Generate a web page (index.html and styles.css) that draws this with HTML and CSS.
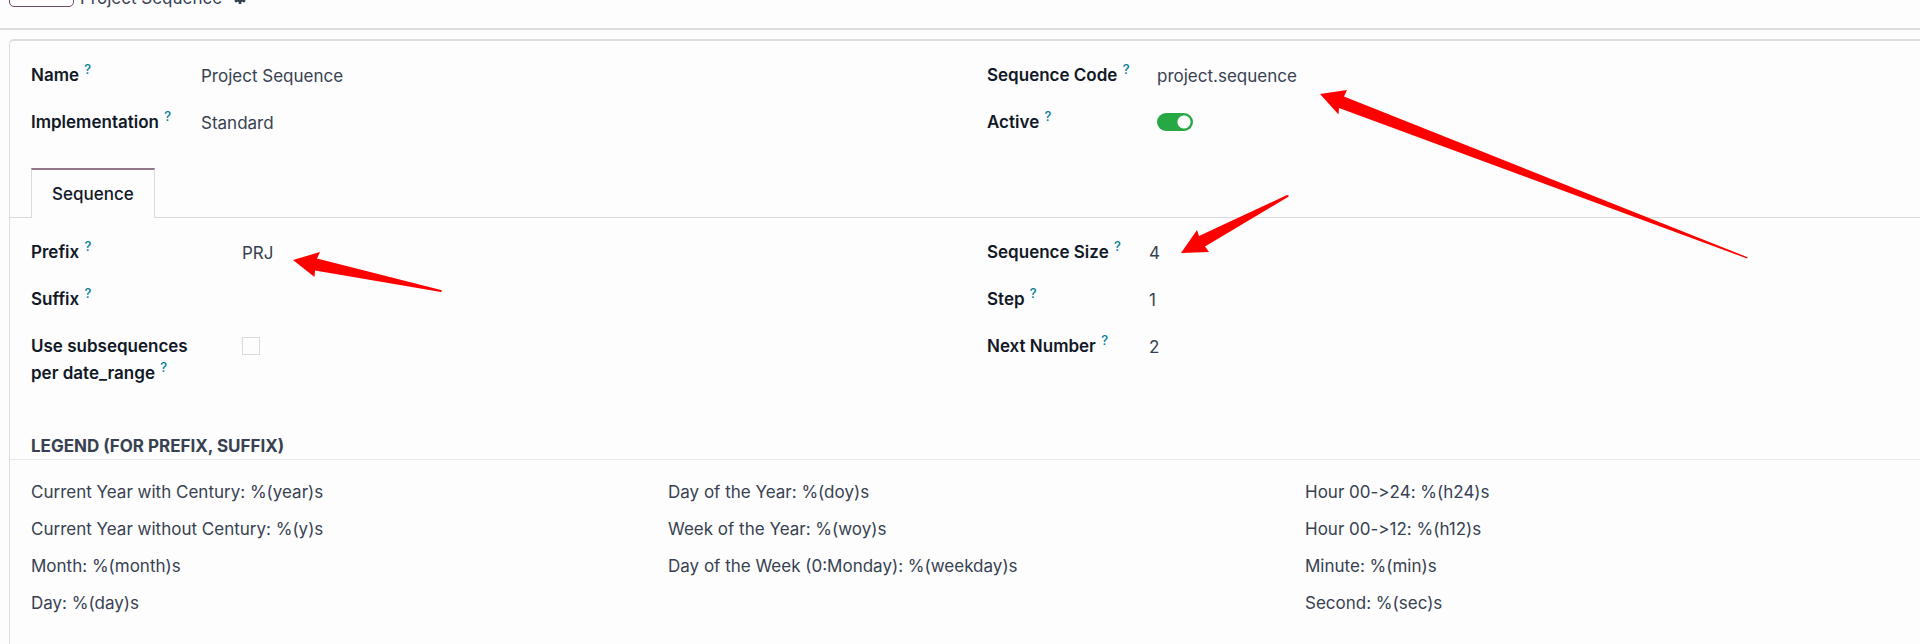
FILE: index.html
```html
<!DOCTYPE html>
<html lang="en">
<head>
	<meta charset="utf-8">
	<title>Project Sequence</title>
	<link rel="stylesheet" href="styles.css">
</head>
<body>
	<header class="control_panel">
		<button class="new_button" aria-label="New"></button>
		<span>Project Sequence</span>
		<svg class="gear" viewBox="0 0 16 16" aria-hidden="true">
			<circle cx="8" cy="8" r="4" fill="none" stroke="currentColor" stroke-width="4"/>
			<path d="M8 0v4M8 12v4M0 8h4M12 8h4M2.5 2.5l2.5 2.5M11 11l2.5 2.5M13.5 2.5l-2.5 2.5M5 11l-2.5 2.5" stroke="currentColor" stroke-width="3"/>
		</svg>
	</header>
	<main class="sheet">
		<div class="group group_main">
			<div class="fields">
				<label for="name">Name <sup>?</sup></label>
				<input type="text" id="name" value="Project Sequence">
				<label for="implementation">Implementation <sup>?</sup></label>
				<select id="implementation">
					<option>Standard</option>
					<option>No gap</option>
				</select>
			</div>
			<div class="fields">
				<label for="code">Sequence Code <sup>?</sup></label>
				<input type="text" id="code" value="project.sequence">
				<label for="active">Active <sup>?</sup></label>
				<input type="checkbox" class="toggle" id="active" checked>
			</div>
		</div>
		<div class="tabs">
			<button class="tab">Sequence</button>
		</div>
		<div class="group group_sequence">
			<div class="fields fields_wide">
				<label for="prefix">Prefix <sup>?</sup></label>
				<input type="text" id="prefix" value="PRJ">
				<label for="suffix">Suffix <sup>?</sup></label>
				<input type="text" id="suffix">
				<label for="subsequences">Use subsequences<br>per date_range <sup>?</sup></label>
				<input type="checkbox" class="check" id="subsequences">
			</div>
			<div class="fields fields_narrow">
				<label for="size">Sequence Size <sup>?</sup></label>
				<input type="text" id="size" value="4">
				<label for="step">Step <sup>?</sup></label>
				<input type="text" id="step" value="1">
				<label for="next">Next Number <sup>?</sup></label>
				<input type="text" id="next" value="2">
			</div>
		</div>
		<h2>Legend (for prefix, suffix)</h2>
		<div class="legend">
			<div>
				<p>Current Year with Century: %(year)s</p>
				<p>Current Year without Century: %(y)s</p>
				<p>Month: %(month)s</p>
				<p>Day: %(day)s</p>
			</div>
			<div>
				<p>Day of the Year: %(doy)s</p>
				<p>Week of the Year: %(woy)s</p>
				<p>Day of the Week (0:Monday): %(weekday)s</p>
			</div>
			<div class="time_codes">
				<p>Hour 00-&gt;24: %(h24)s</p>
				<p>Hour 00-&gt;12: %(h12)s</p>
				<p>Minute: %(min)s</p>
				<p>Second: %(sec)s</p>
			</div>
		</div>
	</main>
	<!-- arrows over the form -->
	<svg class="arrows" width="1920" height="300" viewBox="0 0 1920 300" aria-hidden="true">
		<path d="M293 260L320 252L317 258.500L441 290Q443 291 441 292L315 270.500L314.500 277Z"/>
		<path d="M1181 253L1197 230L1199 236L1287 195Q1290 195 1288 197L1205 246.500L1209 252Z"/>
		<path d="M1320 94L1347 90L1344 96.500L1747 257Q1748 258 1747 258.500L1339 108L1338.500 114.500Z"/>
	</svg>
</body>
</html>
```

FILE: styles.css
```css
*{
	box-sizing: border-box;
}
body
{
	margin: 0;
	background-color: #fdfdfd;
	color: #374151;
	font: 17px/27px Inter, "Liberation Sans", sans-serif;
}
.control_panel
{
	display: flex;
	align-items: flex-end;
	gap: 6px;
	height: 30px;
	padding: 0 9px 16px;
	border-bottom: 2px solid #dcdde1;
	overflow: hidden;
}
.new_button
{
	width: 65px;
	height: 36px;
	margin-bottom: 5px;
	background: none;
	border: 1px solid #714b67;
	border-radius: 5px;
}
.gear
{
	width: 14px;
	height: 14px;
	margin: 0 0 8px 5px;
}
.sheet
{
	margin: 9px 0 0 9px;
	padding-bottom: 27px;
	border: solid #dcdde1;
	border-width: 2px 0 0 1px;
	border-radius: 5px 0 0 0;
}
.group
{
	display: grid;
	grid-template-columns: 1fr 1fr;
	gap: 23px;
	padding-left: 21px;
}
.group_main
{
	padding-top: 21px;
}
.group_sequence
{
	padding-top: 21px;
}
.fields
{
	display: grid;
	grid-template-columns: 170px 1fr;
	align-content: start;
	align-items: start;
	row-gap: 20px;
}
.fields_wide
{
	grid-template-columns: 211px 1fr;
}
.fields_narrow
{
	grid-template-columns: 162px 1fr;
}
label
{
	color: #111827;
	font-weight: 600;
}
sup
{
	margin-left: 1px;
	color: #017e9b;
	font-size: 13px;
	font-weight: 500;
	line-height: 0;
}
input[type="text"], select
{
	height: 27px;
	margin: 1px 0 -1px;
	padding: 0;
	appearance: none;
	background: none;
	border: none;
	color: inherit;
	font: inherit;
}
.toggle, .check
{
	appearance: none;
	height: 18px;
	margin: 4px 0 0;
}
.toggle
{
	width: 36px;
	border-radius: 9px;
	background: radial-gradient(circle at 27px 9px, #fff 6px, #28a745 7px);
}
.check
{
	width: 18px;
	border: 1px solid #d8dadd;
}
.tabs
{
	display: flex;
	margin-top: 32px;
	padding-left: 21px;
	border-bottom: 1px solid #d8dadd;
}
.tab
{
	height: 50px;
	margin-bottom: -1px;
	padding: 0 20px;
	background-color: #fdfdfd;
	border: 1px solid #d8dadd;
	border-top: 2px solid #93758a;
	border-bottom: none;
	color: #111827;
	font: inherit;
	font-weight: 500;
}
h2
{
	margin: 47px 0 0;
	padding-left: 21px;
	border-bottom: 1px solid #e7e9ed;
	font-size: 17px;
	font-weight: 700;
	line-height: 25px;
	text-transform: uppercase;
}
.legend
{
	display: grid;
	grid-template-columns: 1fr 1fr 1fr;
	gap: 22px;
	padding: 19px 0 0 21px;
}
.legend p
{
	margin: 0 0 10px;
}
/* keep -> as two characters */
.time_codes
{
	font-variant-ligatures: no-contextual;
}
.arrows
{
	position: absolute;
	top: 0;
	left: 0;
	fill: #ff0000;
	pointer-events: none;
}
```
